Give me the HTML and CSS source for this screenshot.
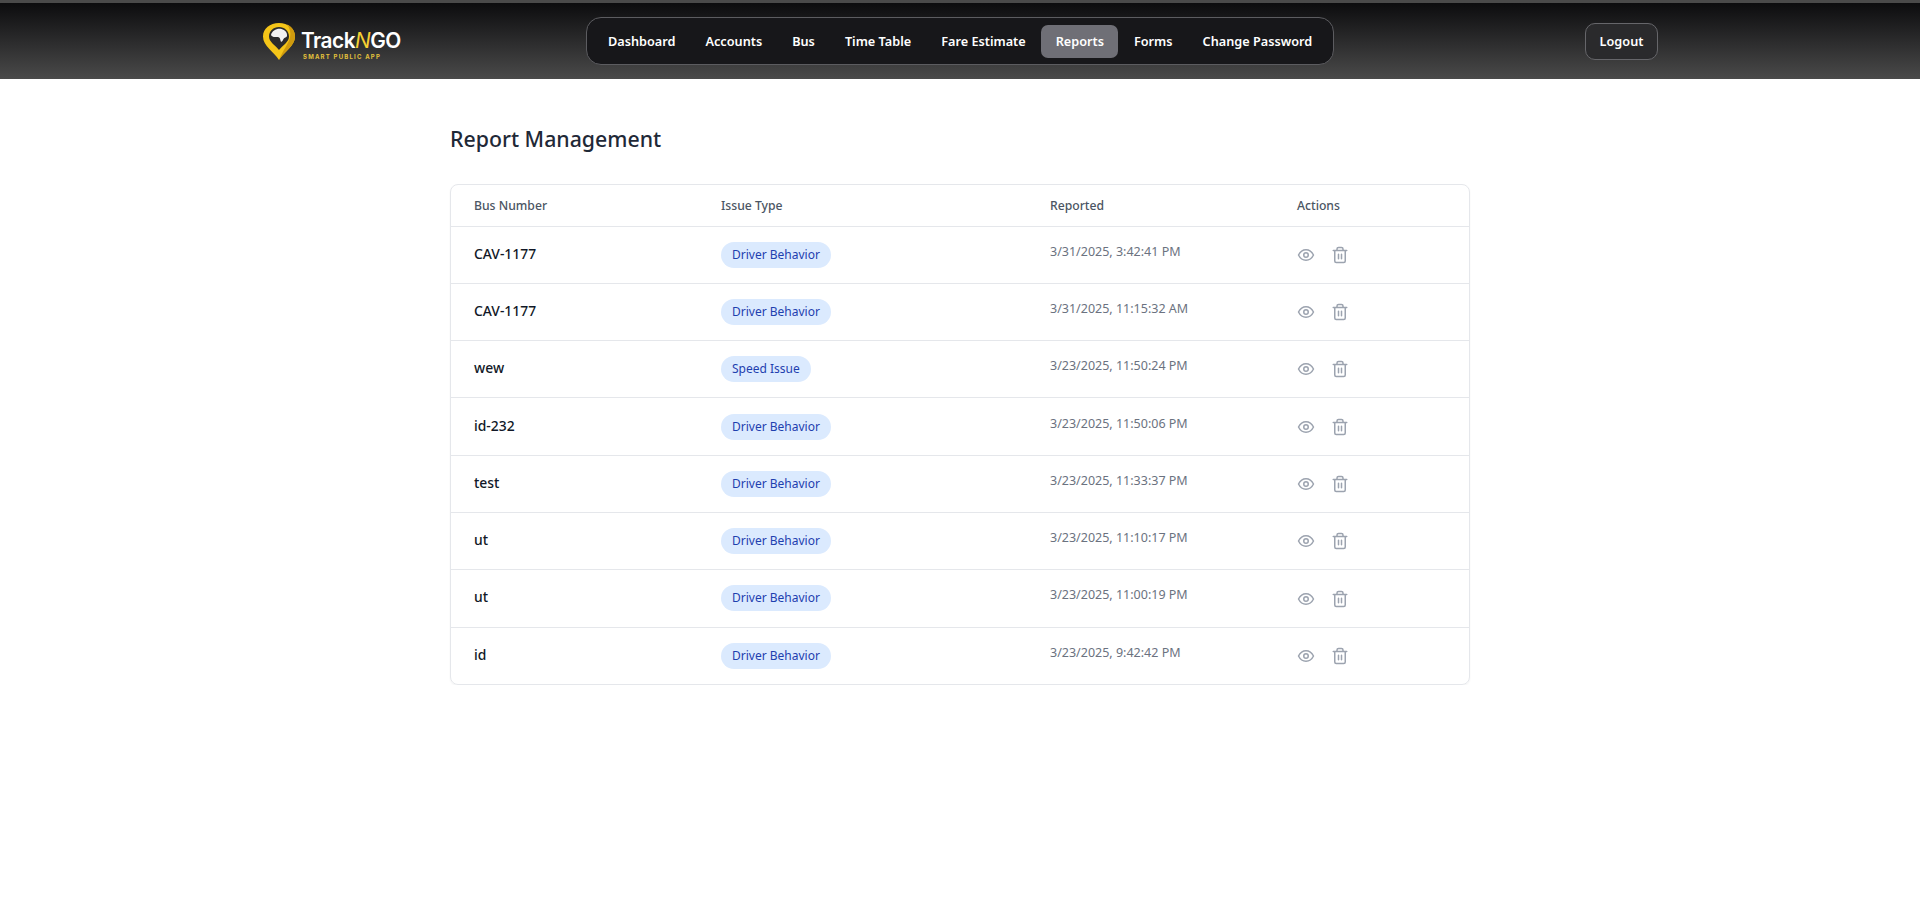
FILE: index.html
```html
<!DOCTYPE html>
<html lang="en">
<head>
    <meta charset="UTF-8">
    <meta name="viewport" content="width=device-width, initial-scale=1.0">
    <title>TrackNGO - Reports</title>
    <link rel="stylesheet" href="styles.css">
</head>
<body>

    <svg class="icon-defs" width="0" height="0">
        <symbol id="icon-eye" viewBox="0 0 24 24"><path d="M2 12s3.500-7 10-7 10 7 10 7-3.500 7-10 7-10-7-10-7Z"/><circle cx="12" cy="12" r="3"/></symbol>
        <symbol id="icon-trash" viewBox="0 0 24 24"><path d="M3 6h18M19 6v14a2 2 0 0 1-2 2H7a2 2 0 0 1-2-2V6M8 6V4a2 2 0 0 1 2-2h4a2 2 0 0 1 2 2v2M10 11v6M14 11v6"/></symbol>
    </svg>

    <header class="topbar">
        <div class="logo">
            <svg class="logo-pin" width="32" height="37" viewBox="0 0 32 37">
                <path d="M16 37C11 29 0 23 0 13.500C0 5.500 7 0 16 0C25 0 32 5.500 32 13.500C32 23 21 29 16 37Z" fill="#f5c518"/>
                <path d="M16 37C21 29 32 23 32 13.500C32 8 29 3.500 24 1.500C27 5 28 10 27 14.500C25.500 21 20 27 16 37Z" fill="#cf9a0e"/>
                <path d="M16 27C12 22 6 19 6 13.500C6 8 10.500 4 16 4C21.500 4 26 8 26 13.500C26 19 20 22 16 27Z" fill="#2b2b2b"/>
                <path d="M8 12C9 7.500 14 5 18.500 6C22 6.800 24.500 9.500 24 13C23.500 15 21.500 14 20.500 16C19.500 18.500 18 20 17.500 17.500C17 15.500 17 14.500 15 14C13 13.500 9.500 15 8 12Z" fill="#f2f2f2"/>
            </svg>
            <div class="logo-text">
                <div class="logo-name">Track<span class="logo-n">N</span>GO</div>
                <div class="logo-tag">SMART PUBLIC APP</div>
            </div>
        </div>

        <nav class="menu">
            <a href="#">Dashboard</a>
            <a href="#">Accounts</a>
            <a href="#">Bus</a>
            <a href="#">Time Table</a>
            <a href="#">Fare Estimate</a>
            <a href="#" class="active">Reports</a>
            <a href="#">Forms</a>
            <a href="#">Change Password</a>
        </nav>

        <a href="#" class="logout">Logout</a>
    </header>

    <main class="content">
        <h1>Report Management</h1>

        <div class="table-card">
            <table>
                <thead>
                    <tr>
                        <th class="col-bus">Bus Number</th>
                        <th class="col-issue">Issue Type</th>
                        <th class="col-date">Reported</th>
                        <th class="col-actions">Actions</th>
                    </tr>
                </thead>
                <tbody>
                    <tr>
                        <td class="bus">CAV-1177</td>
                        <td><span class="badge">Driver Behavior</span></td>
                        <td class="date">3/31/2025, 3:42:41 PM</td>
                        <td class="actions"><svg width="18" height="18"><use href="#icon-eye"/></svg><svg width="18" height="18"><use href="#icon-trash"/></svg></td>
                    </tr>
                    <tr>
                        <td class="bus">CAV-1177</td>
                        <td><span class="badge">Driver Behavior</span></td>
                        <td class="date">3/31/2025, 11:15:32 AM</td>
                        <td class="actions"><svg width="18" height="18"><use href="#icon-eye"/></svg><svg width="18" height="18"><use href="#icon-trash"/></svg></td>
                    </tr>
                    <tr>
                        <td class="bus">wew</td>
                        <td><span class="badge">Speed Issue</span></td>
                        <td class="date">3/23/2025, 11:50:24 PM</td>
                        <td class="actions"><svg width="18" height="18"><use href="#icon-eye"/></svg><svg width="18" height="18"><use href="#icon-trash"/></svg></td>
                    </tr>
                    <tr>
                        <td class="bus">id-232</td>
                        <td><span class="badge">Driver Behavior</span></td>
                        <td class="date">3/23/2025, 11:50:06 PM</td>
                        <td class="actions"><svg width="18" height="18"><use href="#icon-eye"/></svg><svg width="18" height="18"><use href="#icon-trash"/></svg></td>
                    </tr>
                    <tr>
                        <td class="bus">test</td>
                        <td><span class="badge">Driver Behavior</span></td>
                        <td class="date">3/23/2025, 11:33:37 PM</td>
                        <td class="actions"><svg width="18" height="18"><use href="#icon-eye"/></svg><svg width="18" height="18"><use href="#icon-trash"/></svg></td>
                    </tr>
                    <tr>
                        <td class="bus">ut</td>
                        <td><span class="badge">Driver Behavior</span></td>
                        <td class="date">3/23/2025, 11:10:17 PM</td>
                        <td class="actions"><svg width="18" height="18"><use href="#icon-eye"/></svg><svg width="18" height="18"><use href="#icon-trash"/></svg></td>
                    </tr>
                    <tr>
                        <td class="bus">ut</td>
                        <td><span class="badge">Driver Behavior</span></td>
                        <td class="date">3/23/2025, 11:00:19 PM</td>
                        <td class="actions"><svg width="18" height="18"><use href="#icon-eye"/></svg><svg width="18" height="18"><use href="#icon-trash"/></svg></td>
                    </tr>
                    <tr>
                        <td class="bus">id</td>
                        <td><span class="badge">Driver Behavior</span></td>
                        <td class="date">3/23/2025, 9:42:42 PM</td>
                        <td class="actions"><svg width="18" height="18"><use href="#icon-eye"/></svg><svg width="18" height="18"><use href="#icon-trash"/></svg></td>
                    </tr>
                </tbody>
            </table>
        </div>
    </main>

</body>
</html>
```

FILE: styles.css
```css
* {
    box-sizing: border-box;
}
body {
    font-family: "Noto Sans", Arial, sans-serif;
    background-color: #fff;
    color: #111827;
    margin: 0;
}
.icon-defs {
    display: block;
    height: 0;
}
.topbar {
    height: 79px;
    border-top: 3px solid #4a4a4a;
    background: linear-gradient(180deg, #0c0c0e 0%, #4a4a4a 100%);
    display: flex;
    align-items: center;
    padding: 0 262px 0 263px;
}
.logo {
    width: 323px;
    flex-shrink: 0;
    display: flex;
    align-items: center;
    gap: 6px;
}
.logo-text {
    padding-top: 8px;
}
.logo-name {
    font-family: "Inter", sans-serif;
    font-size: 20.800px;
    font-weight: 600;
    line-height: 24px;
    letter-spacing: -0.5px;
    color: #fff;
}
.logo-n {
    color: #f5d033;
    font-style: italic;
    font-weight: 400;
}
.logo-tag {
    font-family: "Inter", sans-serif;
    font-size: 6px;
    font-weight: 700;
    letter-spacing: 1.200px;
    line-height: 8px;
    color: #e3c13c;
    padding-left: 2px;
    white-space: nowrap;
}
.menu {
    width: 748px;
    height: 48px;
    display: flex;
    align-items: center;
    gap: 1px;
    padding: 0 6.500px;
    background: #17171a;
    border: 1px solid #5c5c60;
    border-radius: 15px;
}
.menu a {
    font-size: 12.700px;
    font-weight: 600;
    line-height: 33px;
    height: 33px;
    padding: 0 14.500px;
    color: #fff;
    text-decoration: none;
    border-radius: 7px;
    white-space: nowrap;
}
.menu a.active {
    background: #6f6f76;
}
.logout {
    margin-left: auto;
    width: 73px;
    height: 37px;
    line-height: 35px;
    text-align: center;
    font-size: 12.700px;
    font-weight: 600;
    color: #fff;
    text-decoration: none;
    background: #2a2a2c;
    border: 1px solid #66666a;
    border-radius: 10px;
}
.content {
    width: 1020px;
    margin: 0 auto;
    padding-top: 44px;
}
h1 {
    font-size: 21.300px;
    font-weight: 500;
    line-height: 32px;
    color: #1f2937;
    margin: 0 0 29px 0;
}
.table-card {
    border: 1px solid #e5e7eb;
    border-radius: 8px;
    box-shadow: 0 1px 2px rgba(0, 0, 0, 0.05);
    overflow: hidden;
}
table {
    width: 100%;
    border-collapse: collapse;
    table-layout: fixed;
}
th {
    height: 41px;
    padding: 0 23px;
    text-align: left;
    font-size: 12.200px;
    font-weight: 500;
    color: #4b5563;
}
.col-bus { width: 247px; }
.col-issue { width: 329px; }
.col-date { width: 247px; }
td {
    height: 57.300px;
    padding: 0 23px;
    border-top: 1px solid #e5e7eb;
    font-size: 14px;
}
.bus {
    font-size: 13.900px;
    font-weight: 500;
    color: #111827;
    padding-bottom: 3px;
}
.date {
    font-size: 12.500px;
    color: #6b7280;
    padding-bottom: 7px;
}
.badge {
    display: inline-block;
    padding: 0 11px;
    line-height: 26px;
    font-size: 12px;
    color: #1e40af;
    background: #dbeafe;
    border-radius: 13px;
}
.actions {
    padding-bottom: 2px;
}
.actions svg {
    display: inline-block;
    vertical-align: middle;
    fill: none;
    stroke: #9ca3af;
    stroke-width: 2;
    stroke-linecap: round;
    stroke-linejoin: round;
    margin-right: 16px;
}
```
